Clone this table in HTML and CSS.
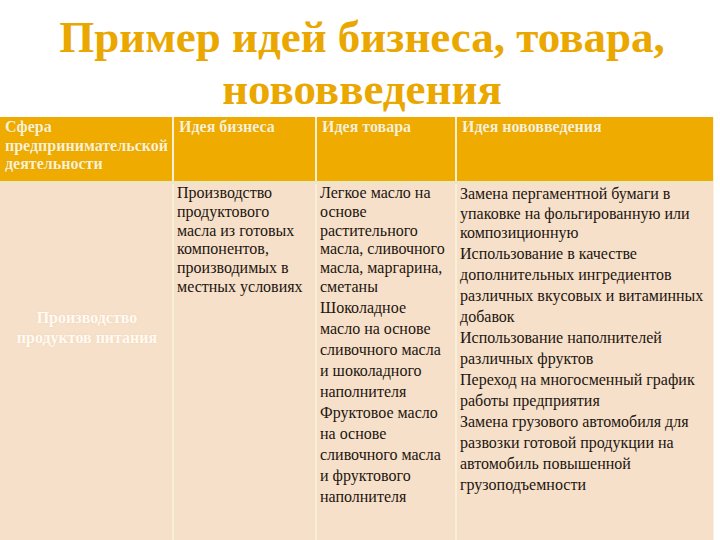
FILE: index.html
```html
<!DOCTYPE html>
<html lang="ru">
<head>
<meta charset="utf-8">
<title>Пример идей бизнеса</title>
<link rel="stylesheet" href="styles.css">
</head>
<body>
<div class="page">
  <h1 class="title">Пример идей бизнеса, товара,<br>нововведения</h1>
  <div class="table">
    <div class="th c1">Сфера предпринимательской деятельности</div>
    <div class="th c2">Идея бизнеса</div>
    <div class="th c3">Идея товара</div>
    <div class="th c4">Идея нововведения</div>
    <div class="sep"></div>
    <div class="td c1 sphere"><span>Производство продуктов питания</span></div>
    <div class="td c2">
      <p class="tight">Производство продуктового масла из готовых компонентов, производимых в местных условиях</p>
    </div>
    <div class="td c3">
      <p class="tight">Легкое масло на основе растительного масла, сливочного масла, маргарина, сметаны</p>
      <p>Шоколадное масло на основе сливочного масла и шоколадного наполнителя</p>
      <p>Фруктовое масло на основе сливочного масла и фруктового наполнителя</p>
    </div>
    <div class="td c4">
      <p class="tight2">Замена пергаментной бумаги в упаковке на фольгированную или композиционную</p>
      <p>Использование в качестве дополнительных ингредиентов различных вкусовых и витаминных добавок</p>
      <p>Использование наполнителей различных фруктов</p>
      <p>Переход на многосменный график работы предприятия</p>
      <p>Замена грузового автомобиля для развозки готовой продукции на автомобиль повышенной грузоподъемности</p>
    </div>
  </div>
</div>
</body>
</html>
```
FILE: styles.css
```css
html, body {
  margin: 0;
  padding: 0;
  background: #ffffff;
  overflow: hidden;
}
.page {
  width: 720px;
  height: 540px;
  overflow: hidden;
  font-family: "Liberation Serif", "Times New Roman", serif;
}
.title {
  margin: 0;
  padding-top: 11px;
  height: 106px;
  font-size: 45px;
  line-height: 52px;
  font-weight: bold;
  text-align: center;
  color: #e9a700;
  padding-left: 4px;
}
.table {
  display: grid;
  grid-template-columns: 172px 141px 138px 256px;
  grid-template-rows: 64px 3px 400px;
  column-gap: 2px;
  width: 713px;
  background: #f7efd6;
  border-right: 1px solid #fbeede;
}
.th {
  background: #efab00;
  color: #fbf1d3;
  font-size: 16px;
  font-weight: bold;
  line-height: 18.5px;
  padding: 1px 2px 0 5px;
  text-shadow: 0 0 1px #d79a00;
}
.sep {
  grid-column: 1 / -1;
  background: #ede6c6;
}
.td {
  background: #f6e0c9;
  color: #1c1510;
  font-size: 16px;
  line-height: 21px;
  padding: 0 1px 0 3px;
}
.td.c2, .td.c3 {
  padding-right: 8px;
}
.td p {
  margin: 0;
}
.td p.tight {
  line-height: 18.8px;
}
.td p.tight2 {
  line-height: 19.5px;
}
.sphere {
  display: flex;
  justify-content: center;
  text-align: center;
  padding-top: 124px;
  font-weight: bold;
  font-size: 16px;
  line-height: 20px;
  color: #fffaf3;
  text-shadow: 0 0 2px #f2d2b6;
}
.sphere span {
  width: 150px;
}
```
